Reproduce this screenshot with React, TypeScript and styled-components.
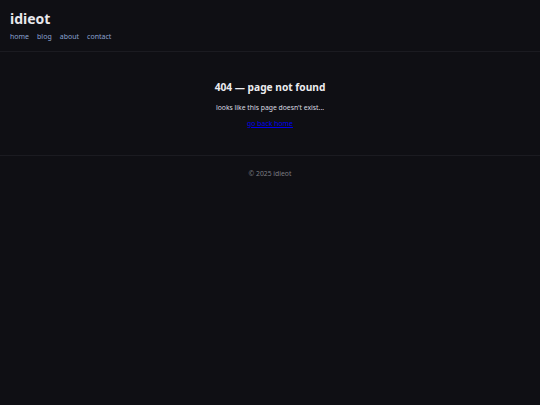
import React from "react";
import styled, { createGlobalStyle } from "styled-components";

const Global = createGlobalStyle`
  html, body { margin: 0; padding: 0; background: #0f0f14; }
  body { font-family: "Noto Sans", "DejaVu Sans", sans-serif; color: #e6e6e6; min-height: 405px; }
`;

const Header = styled.header`
  padding: 10px 10px 0 10px;
  height: 41px;
  border-bottom: 1px solid #1b1b21;
`;

const Logo = styled.div`
  font-size: 14px;
  font-weight: 700;
  line-height: 18px;
  color: #e8e8ec;
`;

const Nav = styled.nav`
  display: flex;
  gap: 8px;
  margin-top: 4px;
`;

const NavLink = styled.a`
  font-size: 7px;
  line-height: 10px;
  color: #8aa2d2;
  text-decoration: none;
  &:visited, &:link { color: #8aa2d2; }
`;

const Main = styled.main`
  display: flex;
  flex-direction: column;
  align-items: center;
  padding-top: 29px;
  height: 74px;
  border-bottom: 1px solid #1b1b21;
`;

const Title = styled.h1`
  margin: 0;
  font-size: 10.2px;
  line-height: 13px;
  font-weight: 700;
  color: #ececf0;
`;

const Text = styled.p`
  margin: 9px 0 0 0;
  font-size: 6.8px;
  line-height: 10px;
  color: #dcdce0;
`;

const HomeLink = styled.a`
  margin-top: 6px;
  font-size: 6.9px;
  line-height: 10px;
  color: #0000ee;
  text-decoration: underline;
  &:visited, &:link { color: #0000ee; }
`;

const Footer = styled.footer`
  display: flex;
  justify-content: center;
  padding-top: 13px;
  font-size: 6.8px;
  line-height: 10px;
  color: #7d7d84;
`;

export default function App() {
  return (
    <>
      <Global />
      <Header>
        <Logo>idieot</Logo>
        <Nav>
          <NavLink href="#">home</NavLink>
          <NavLink href="#">blog</NavLink>
          <NavLink href="#">about</NavLink>
          <NavLink href="#">contact</NavLink>
        </Nav>
      </Header>
      <Main>
        <Title>404 — page not found</Title>
        <Text>looks like this page doesn't exist...</Text>
        <HomeLink href="#">go back home</HomeLink>
      </Main>
      <Footer>© 2025 idieot</Footer>
    </>
  );
}
